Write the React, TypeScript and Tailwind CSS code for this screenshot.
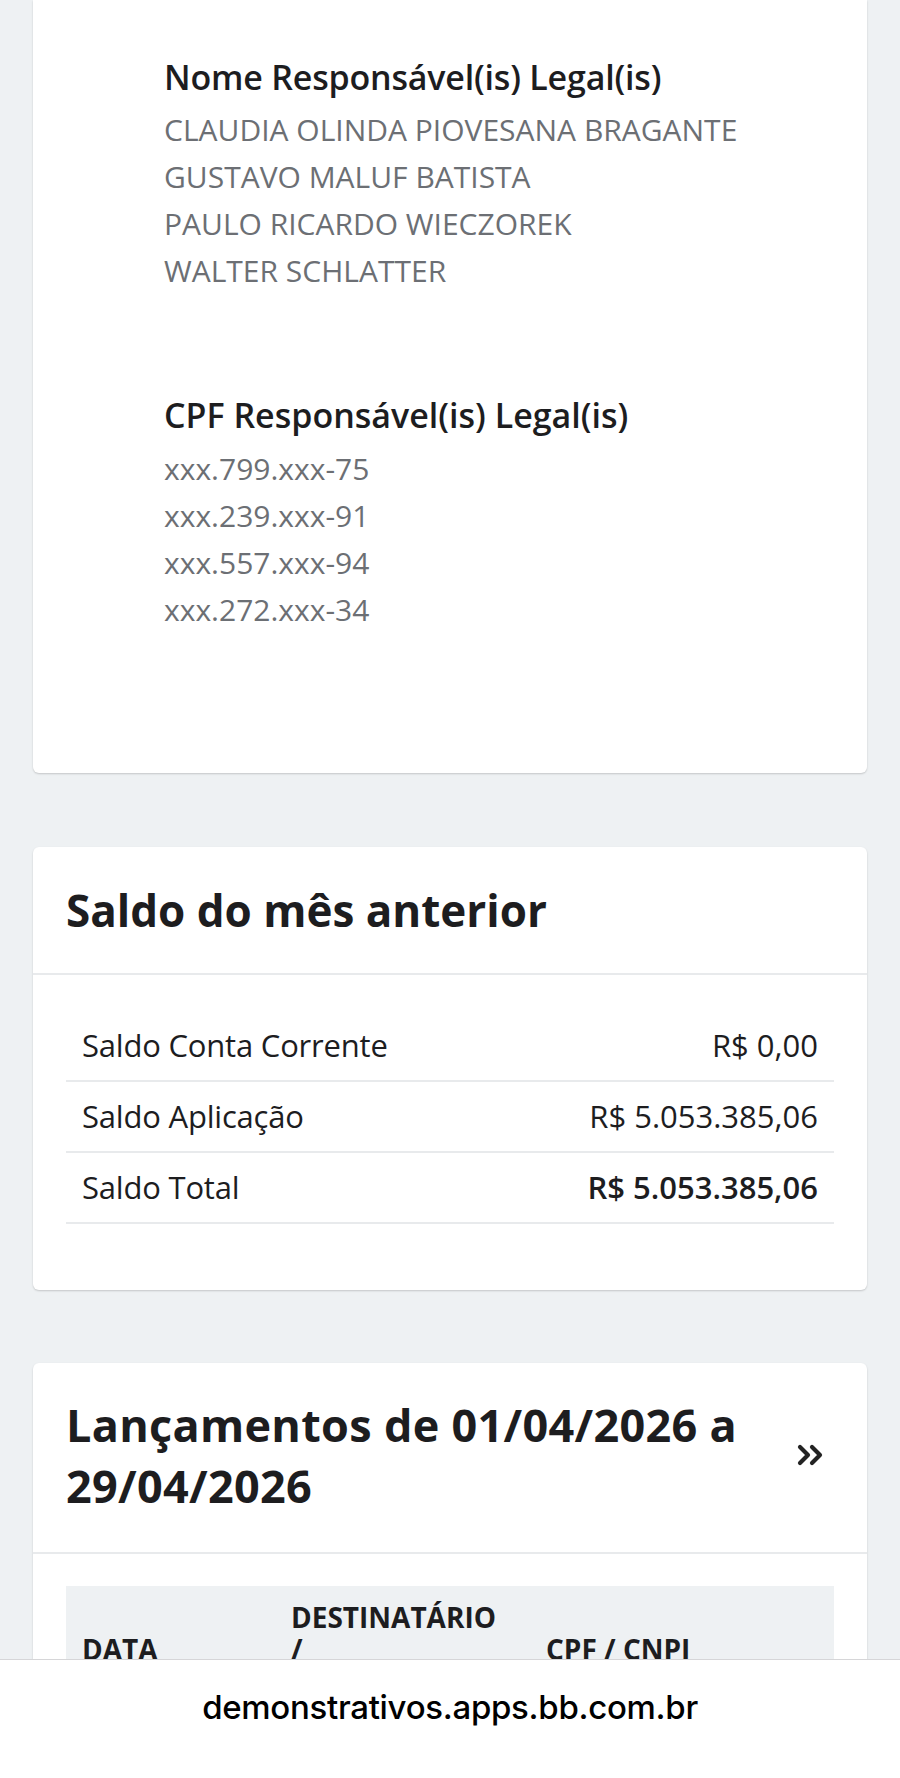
const nomes = [
  'CLAUDIA OLINDA PIOVESANA BRAGANTE',
  'GUSTAVO MALUF BATISTA',
  'PAULO RICARDO WIECZOREK',
  'WALTER SCHLATTER',
];

const cpfs = ['xxx.799.xxx-75', 'xxx.239.xxx-91', 'xxx.557.xxx-94', 'xxx.272.xxx-34'];

const saldos = [
  { label: 'Saldo Conta Corrente', valor: 'R$ 0,00', bold: false },
  { label: 'Saldo Aplicação', valor: 'R$ 5.053.385,06', bold: false },
  { label: 'Saldo Total', valor: 'R$ 5.053.385,06', bold: true },
];

function DoubleChevron() {
  return (
    <svg width="26" height="22" viewBox="0 0 26 22" fill="none" stroke="#232323" strokeWidth="4.2" strokeLinecap="round" strokeLinejoin="round">
      <path d="M3 3 L11 11 L3 19" />
      <path d="M15 3 L23 11 L15 19" />
    </svg>
  );
}

export default function App() {
  return (
    <div className="h-[1778px] flex flex-col bg-[#eef1f3] overflow-hidden font-['Open_Sans',sans-serif] text-[#1d1d1f]">
      <div className="flex-1 overflow-hidden px-[33px]">
        {/* responsáveis legais */}
        <section className="bg-white rounded-b-md shadow-[0_1px_2px_rgba(0,0,0,0.18)] pl-[131px] pt-[59px] pb-[140px]">
          <h3 className="text-[34px] leading-[36px] font-semibold tracking-[-0.2px]">Nome Responsável(is) Legal(is)</h3>
          <ul className="mt-[11px] text-[30px] leading-[47px] text-[#6c6f74]">
            {nomes.map((n) => (
              <li key={n}>{n}</li>
            ))}
          </ul>
          <h3 className="mt-[103px] text-[34px] leading-[36px] font-semibold">CPF Responsável(is) Legal(is)</h3>
          <ul className="mt-[12px] text-[30px] leading-[47px] text-[#6c6f74]">
            {cpfs.map((c) => (
              <li key={c}>{c}</li>
            ))}
          </ul>
        </section>

        {/* saldo do mês anterior */}
        <section className="mt-[74px] bg-white rounded-md shadow-[0_1px_2px_rgba(0,0,0,0.18)]">
          <div className="px-[33px] pt-[40px] pb-[40px] border-b-2 border-[#e8eaec]">
            <h2 className="text-[44px] leading-[46px] font-bold">Saldo do mês anterior</h2>
          </div>
          <div className="px-[33px] pt-[36px] pb-[66px]">
            {saldos.map((s) => (
              <div
                key={s.label}
                className="h-[71px] flex items-center justify-between px-[16px] border-b-2 border-[#e8eaec] text-[31px]"
              >
                <span className="tracking-[-0.2px]">{s.label}</span>
                <span className={s.bold ? 'font-semibold' : ''}>{s.valor}</span>
              </div>
            ))}
          </div>
        </section>

        {/* lançamentos */}
        <section className="mt-[73px] bg-white rounded-t-md shadow-[0_1px_2px_rgba(0,0,0,0.18)]">
          <div className="flex items-center justify-between pl-[33px] pr-[44px] pt-[31px] pb-[36px] border-b-2 border-[#e8eaec]">
            <h2 className="w-[700px] text-[45px] leading-[61px] font-bold tracking-[0.3px]">
              Lançamentos de 01/04/2026 a 29/04/2026
            </h2>
            <DoubleChevron />
          </div>
          <div className="px-[33px] pt-[32px]">
            <div className="bg-[#eef1f3] flex pt-[15px] pb-[14px] text-[28px] leading-[32px] font-bold uppercase">
              <div className="w-[225px] pl-[16px] self-center">Data</div>
              <div className="w-[255px] flex flex-col">
                <span>Destinatário</span>
                <span>/</span>
                <span>Remetente</span>
              </div>
              <div className="flex-1 self-center">CPF / CNPJ</div>
            </div>
          </div>
        </section>
      </div>

      <div className="h-[119px] shrink-0 bg-white border-t border-[#d6d6d8] flex justify-center pt-[28px]">
        <span className="font-['Inter',sans-serif] text-[33px] leading-[38px] font-medium tracking-[-0.3px] text-black">
          demonstrativos.apps.bb.com.br
        </span>
      </div>
    </div>
  );
}
